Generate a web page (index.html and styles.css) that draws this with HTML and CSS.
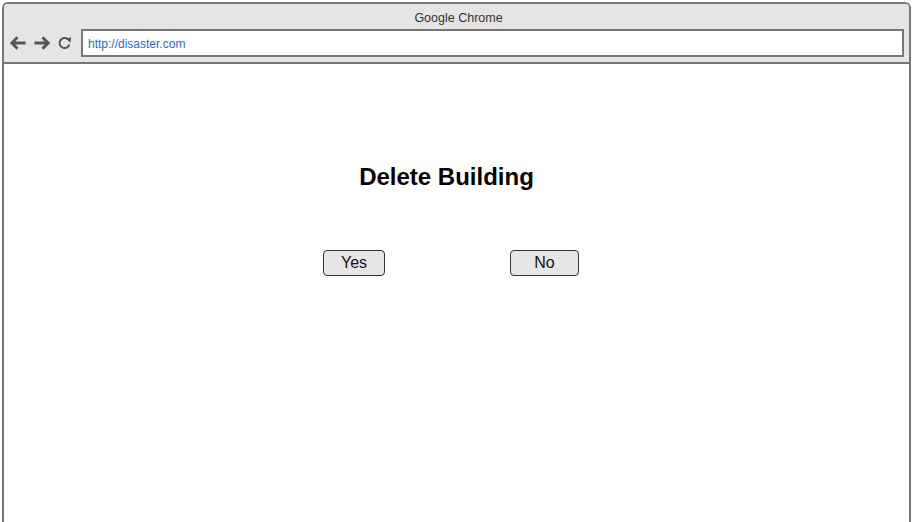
FILE: index.html
```html
<!DOCTYPE html>
<html>
<head>
<meta charset="utf-8">
<title>Delete Building</title>
<link rel="stylesheet" href="styles.css">
</head>
<body>
<div class="window">
  <div class="chrome">
    <div class="title">Google Chrome</div>
    <div class="toolbar">
      <div class="navs">
        <svg class="nav" width="18" height="16" viewBox="0 0 18 16"><path d="M16.5 8H3M8.5 2.2L2.8 8l5.7 5.8" fill="none" stroke="#555" stroke-width="2.8" stroke-linecap="butt" stroke-linejoin="miter"/></svg>
        <svg class="nav" width="18" height="16" viewBox="0 0 18 16"><path d="M1.5 8H15M9.5 2.2L15.2 8l-5.7 5.8" fill="none" stroke="#555" stroke-width="2.8" stroke-linecap="butt" stroke-linejoin="miter"/></svg>
        <svg class="nav reload" width="16" height="16" viewBox="0 0 16 16"><path d="M12.4 9.4A5 5 0 1 1 10.8 4.2" fill="none" stroke="#555" stroke-width="2"/><path d="M8.6 3.6l5.6-1.4-0.8 5.6z" fill="#555"/></svg>
      </div>
      <div class="address">http://disaster.com</div>
    </div>
  </div>
  <div class="content">
    <h1 class="heading">Delete Building</h1>
    <div class="actions">
      <button class="btn btn-yes">Yes</button>
      <button class="btn btn-no">No</button>
    </div>
  </div>
</div>
</body>
</html>
```

FILE: styles.css
```css
html, body {
  margin: 0;
  padding: 0;
  background: #fff;
  overflow: hidden;
  font-family: "Liberation Sans", Arial, sans-serif;
}
.window {
  margin: 2px 0 0 2px;
  width: 905px;
  height: 518px;
  border: 2px solid #777;
  border-bottom: none;
  border-radius: 6px 6px 0 0;
  overflow: hidden;
}
.chrome {
  background: #e5e5e5;
  border-bottom: 2px solid #777;
  padding-bottom: 5px;
}
.title {
  height: 25px;
  line-height: 28px;
  text-align: center;
  font-size: 12.5px;
  color: #333;
  padding-left: 4px;
}
.toolbar {
  display: flex;
  align-items: center;
  padding-right: 5px;
}
.navs {
  display: flex;
  align-items: center;
  width: 77px;
  padding-left: 5px;
  box-sizing: border-box;
  gap: 6px;
}
.nav { display: block; }
.address {
  flex: 1;
  height: 24px;
  line-height: 27px;
  border: 2px solid #777;
  background: #fff;
  font-size: 12px;
  color: #3366cc;
  padding-left: 5px;
}
.content {
  padding-right: 20px;
}
.heading {
  margin: 99px 0 0;
  font-size: 24px;
  line-height: 28px;
  font-weight: bold;
  text-align: center;
  color: #000;
}
.actions {
  display: flex;
  margin-top: 59px;
  padding-left: 319px;
  gap: 125px;
}
.btn {
  height: 26px;
  padding: 0;
  border: 1px solid #333;
  border-radius: 4px;
  background: #e6e6e6;
  font-family: "Liberation Sans", Arial, sans-serif;
  font-size: 16px;
  color: #111;
}
.btn-yes { width: 62px; }
.btn-no { width: 69px; }
```
